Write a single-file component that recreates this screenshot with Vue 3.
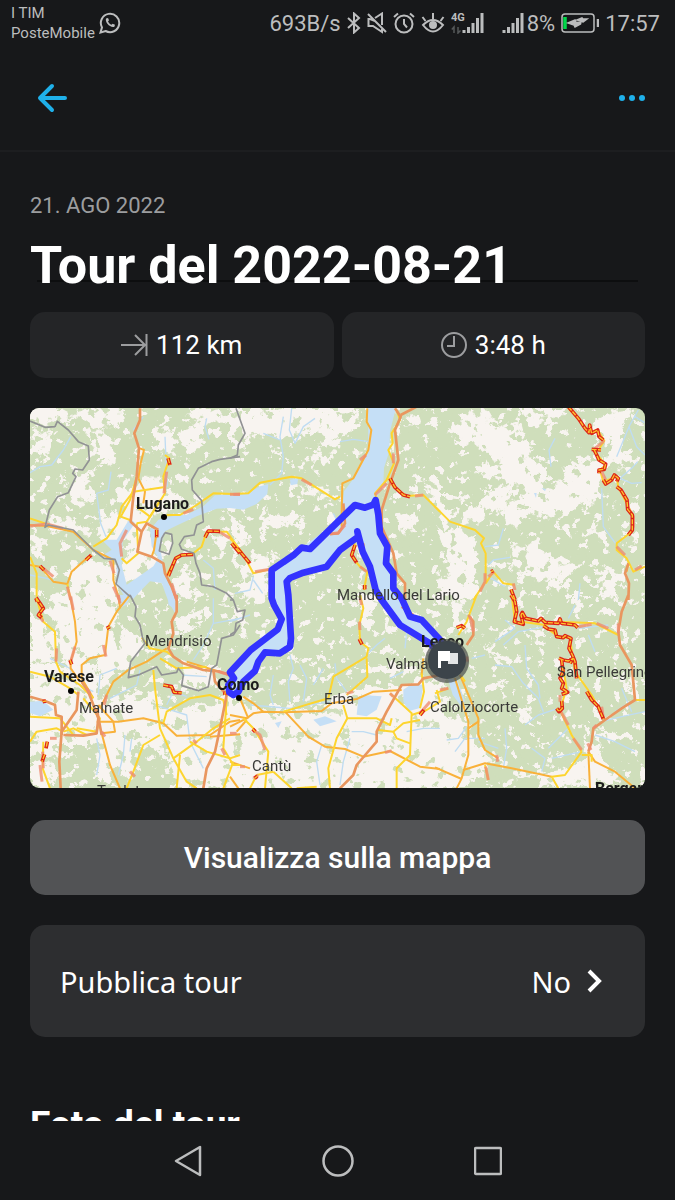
<script setup>
import { ref } from 'vue'

const date = '21. AGO 2022'
const title = ref('Tour del 2022-08-21')
const published = ref(false)

// The map is drawn in six sectors, each with its own origin
const sectors = [
    {
        x: 0, y: -24,
        clearings: [
            '0,25 90,25 130,45 180,30 275,25 270,78 210,82 140,60 80,55 40,68 0,60', '165,95 215,88 260,150 240,195 190,160', '365,90 440,100 432,160 380,150',
            '290,235 410,240 440,290 420,340 360,350 330,420 250,430 195,390 240,340 262,280', '275,480 320,390 365,390 390,490 330,550 280,545',
            '120,500 190,480 250,490 270,610 120,610', '50,345 190,385 180,410 50,385', '470,40 620,30 615,70 520,72', '430,115 500,60 520,120 480,160',
            '0,110 60,80 70,120 10,190', '100,260 180,200 190,290 120,330', '0,410 60,400 50,440 10,460', '430,540 470,500 500,530 480,600 430,600', '540,410 590,400 600,440 570,450'
        ],
        streams: ['0,218 30,200 65,195 100,150 122,110', '243,215 235,270 200,280 212,370 228,410', '405,110 408,180 412,260', '530,55 525,80 537,118', '520,480 550,505 555,570', '310,90 340,50', '0,525 50,535 90,550'],
        major: ['330,25 330,60 313,100 327,145 320,230 310,290 302,365 335,395 322,455 365,470 400,490 405,520 425,560 440,600', '335,395 350,370 385,390'],
        orange: ['330,145 342,150 332,190 325,235', '325,235 345,275 340,310', '380,395 372,450 365,470', '0,375 50,378 130,395 190,450 250,480 250,540 268,600', '0,495 30,500 70,545 112,552 125,515 175,470'],
        yellow: [
            '405,165 418,175 400,230 405,280 380,320 350,365 320,370', '190,440 230,415 260,375 275,320 310,275 400,262', '320,232 300,300 272,350 300,360', '410,345 450,345 500,315 550,280 630,283',
            '320,370 325,460 290,490 275,475', '408,528 440,470 490,460 515,440 530,395 590,395 630,450', '0,355 45,370', '320,320 360,350 390,300', '0,470 20,520 20,590', '112,552 122,600'
        ],
        slow: ['410,215 402,280', '275,470 270,430 290,390', '0,378 50,372 100,385', '425,550 440,600', '565,394 600,415', '610,283 630,283', '40,505 70,530', '112,560 122,600', '240,482 252,520', '250,560 268,600', '460,340 490,328'],
        jam: ['414,175 420,195', '380,390 380,412', '168,480 184,465', '30,498 42,510', '415,528 437,475 455,465 490,463', '525,412 535,393 570,394', '605,430 630,460', '18,595 22,605'],
        border: ['0,63 45,82 75,80 82,64 115,90 145,125 175,138 178,180 158,210 135,207 128,220 138,230 115,278 83,290 58,330 45,382 55,375 130,390 190,450 222,475 255,478 268,510 258,552 300,590', '405,398 425,403 428,430 417,463 388,453 395,415 405,398', '630,170 570,178 545,185 505,205 485,240 487,270 515,302 520,365 500,375 492,405 463,410 448,433 455,448 492,460 498,490 510,520 515,555 550,560 590,580 610,600']
    },
    {
        x: 600, y: -24,
        clearings: ['0,25 390,25 395,65 340,115 300,145 240,90 150,110 60,105 20,150 0,140', '260,150 310,160 300,200 250,190', '110,345 200,330 205,370 100,380', '510,60 580,50 560,80 510,80', '560,240 630,250 630,310', '60,480 110,470 115,600 40,600 20,560', '0,340 30,360 60,430 20,440', '190,250 250,260 330,290 330,305 210,280', '500,360 540,350 560,385 510,390', '465,130 490,125 488,160'],
        streams: ['160,50 150,110 160,170 155,220 120,255', '185,25 178,90 195,130 220,80 255,55', '100,100 150,120', '330,125 370,118 415,125', '310,340 335,390', '70,530 60,570 15,580', '70,540 98,580'],
        major: ['495,25 512,50 495,90 505,180 480,250 455,330 455,380 490,460 500,520 525,550 525,600', '512,45 560,20', '340,310 345,370 325,400 300,402'],
        orange: ['412,25 410,65 424,90 415,150 370,235 337,250 335,340 335,380'],
        yellow: ['0,283 55,280 90,248 185,230 215,235 315,298 330,290', '500,30 510,60 485,100 488,130 475,150 492,190 470,240 435,280 440,300', '475,235 490,260 530,288 580,285 630,335', '0,415 35,455 70,520 120,508', '375,430 365,470 390,500 412,515 402,570'],
        slow: ['0,283 30,283', '215,238 245,255', '390,180 408,165', '435,285 470,250', '490,160 490,190', '300,402 325,398 345,375', '75,515 120,508', '555,288 580,285', '390,500 410,515', '400,430 400,460'],
        jam: ['22,445 60,490', '480,235 495,262 520,285 540,290', '375,435 365,465 380,488', '404,555 404,568'],
        border: ['18,25 45,100 25,135 22,165 0,175']
    },
    {
        x: 1215, y: -24,
        clearings: [
            '40,75 120,40 260,90 275,150 315,180 320,250 340,260 380,240 420,180 500,170 495,290 380,350 265,345 245,385 200,365 190,330 260,290 268,260 180,235 100,215 150,195 160,155 130,130 30,110',
            '250,25 400,25 390,45 300,60 270,70', '510,50 590,25 560,120 590,180 510,215 500,130 480,80', '0,390 60,380 120,420 125,560 110,600 0,600 0,540 60,500', '160,270 240,260 230,300 120,370 80,360 130,310',
            '220,460 300,420 345,470 420,500 370,570 310,540 240,510', '500,500 560,520 550,600 500,590', '0,290 60,340 40,380 0,350', '430,400 500,390 510,405 450,415', '570,160 615,160 600,190'
        ],
        streams: ['360,115 342,150 348,200', '500,265 505,380 545,435', '610,30 582,80 545,170', '582,80 605,140 630,165', '555,235 590,205 608,185', '555,235 590,250 620,248', '205,385 190,435 150,440', '225,472 175,480 160,495', '160,530 210,560', '435,550 430,600', '600,50 628,68'],
        major: ['580,490 570,520 582,550 580,600'],
        orange: ['580,490 575,515'],
        yellow: ['0,320 45,365 120,390 147,415 138,430 152,460 152,545 115,600', '400,25 450,80 465,95 488,90 508,122 490,150 475,150 512,195 495,210 505,245 545,230 550,262 575,310 595,350 590,395 545,430 545,450 575,475 595,515 630,500', '152,550 175,515 205,550 240,555'],
        slow: ['490,100 505,125 480,145', '575,300 580,325 595,350 595,380 582,405', '545,440 570,465', '150,520 150,545 135,575', '160,530 178,515', '600,510 620,498', '235,550 240,570', '500,215 512,240'],
        jam: ['400,20 430,55 450,85 462,98 464,75 470,100 488,90 492,110 505,120', '478,150 492,180 512,192 508,208 492,210 492,220', '505,240 512,252 530,240 538,225 550,235 545,245', '545,260 558,270 576,300 578,328 592,345 592,390 580,405', '168,515 175,512', '228,568 240,600', '470,148 498,150'],
        border: []
    },
    {
        x: 0, y: 561,
        clearings: ['0,40 40,80 75,110 75,200 0,200', '35,0 260,0 265,60 230,150 180,190 150,210 100,200 80,100', '0,205 200,210 200,260 230,330 320,290 380,290 380,345 560,330 630,290 630,580 430,580 420,490 330,440 300,500 210,580 200,450 0,450', '230,110 330,120 340,150 290,220 220,280 200,200', '0,430 80,440 60,580 0,580', '400,380 600,300 600,440 450,500', '440,190 560,230 530,280 460,270', '440,70 520,40 500,60 460,140', '270,510 300,440 310,560'],
        streams: ['630,70 550,85 520,150 490,195', '550,85 550,10', '455,240 530,245', '200,430 210,480 200,540', '330,225 320,270 240,310', '285,420 280,480 265,540', '390,335 470,360 480,440 520,520', '305,430 300,470', '410,330 430,290 470,305', '60,190 120,220 130,260 190,290', '260,220 210,240 205,300'],
        major: ['440,0 440,50 425,80 430,115 415,160 430,185 460,205 520,225 570,230 600,240', '145,290 140,345 95,410 88,500 92,580', '550,225 555,260 590,300 570,400 555,470 530,520 520,580', '100,420 160,422 200,415 205,370 175,290 155,260', '0,305 45,318 75,330 78,360 95,365 95,420', '200,340 215,420'],
        orange: ['300,0 260,50 235,95 225,180 180,190 155,210 155,250 190,310', '120,0 135,80 140,140 122,200 122,220 150,260', '295,225 250,260 230,300 210,340', '200,380 265,380 340,370 400,385 440,422 540,420 600,380 630,375', '540,425 630,418', '205,330 250,380 255,410 215,415 240,510 270,580', '265,0 270,40', '470,200 600,240', '295,225 350,200 410,160'],
        yellow: ['20,10 40,80 75,110 78,200 90,230 150,270 190,310', '0,230 60,245 120,280 145,300', '0,440 20,410 80,400 100,410', '140,400 200,410 210,370 160,310', '370,225 375,280 390,400 430,490 470,560 500,580', '390,420 340,450 310,530 290,580', '400,385 410,350 480,310 540,300 580,315 590,360', '335,128 360,160 410,170 430,185', '390,190 440,220 530,215', '430,490 500,440 550,400 600,370', '480,440 530,470 600,490 630,480', '40,440 38,520 60,580', '450,480 440,580', '0,365 90,370 130,420', '590,310 580,460 610,510 630,510', '610,500 580,580', '100,410 130,400 170,420'],
        slow: ['122,5 130,45', '80,160 78,200', '135,155 122,200', '230,300 222,330', '38,470 40,520', '60,430 80,430', '300,530 315,545', '220,150 228,185', '265,0 270,25', '600,240 565,230', '30,510 36,560', '170,280 180,295', '490,435 500,445', '215,410 225,425', '575,460 585,480', '25,60 40,80'],
        jam: ['18,8 30,25 40,40 25,60 35,68', '230,100 240,95', '400,270 425,275 432,292 455,294', '38,320 48,318', '52,440 48,460', '44,478 36,500', '120,195 125,208', '586,290 584,300'],
        border: ['300,0 318,35 315,65 330,90 338,130 345,145 302,200 295,248 330,238 380,215 395,240 440,232 445,220 460,240 455,272 505,287 535,275 545,220 560,210 575,130 610,120 630,90']
    },
    {
        x: 600, y: 561,
        clearings: ['0,310 80,345 170,350 290,340 350,280 500,275 580,250 640,250 640,590 0,590', '380,0 450,0 430,60 410,100 390,70', '160,340 300,350 420,310 430,440 320,580 150,560', '450,210 530,215 520,240 440,230', '240,120 280,150 250,160', '220,190 290,220 280,230', '480,60 530,100 500,110', '0,40 50,50 60,100 0,80'],
        streams: ['130,240 120,300 130,330', '180,180 190,220 175,260 180,320', '210,210 230,250 220,320', '280,220 250,270', '315,205 320,250 350,290', '410,180 440,150 465,130', '520,230 480,250', '0,80 60,60', '60,330 180,340 300,320', '360,430 340,500 330,570', '365,410 400,410 440,420', '530,410 580,400 630,400', '530,110 525,160', '275,450 260,500 270,570'],
        major: ['330,580 370,540 380,510 440,440 440,410 470,350 515,270 565,268 580,250 630,240', '515,35 550,60'],
        orange: ['0,360 50,370 70,355 100,350 160,352 275,348 305,325 380,312 430,290 515,285', '165,350 235,425 285,455 345,462 400,485 480,468 570,515 630,522', '40,305 70,325 100,350', '30,310 55,370', '0,395 50,370', '20,410 50,375', '0,500 60,520', '0,545 25,580', '580,190 575,240'],
        yellow: ['390,0 400,40 388,90 390,140 415,160 410,185 310,245 295,310 160,350', '410,190 412,245 350,300', '340,330 352,370 320,430 295,520 300,580', '350,370 440,370 480,390 485,370', '40,370 70,400 115,470 105,580', '130,530 185,580', '480,295 545,355 540,480 500,520 500,580', '445,405 490,410 520,385 570,375', '490,410 500,430 540,445', '60,580 80,540 130,530', '545,360 590,345 630,320 620,285', '200,580 260,575', '575,235 582,290 570,340'],
        slow: ['388,80 390,105', '70,405 90,420 105,465', '465,473 485,467', '30,515 45,515', '350,295 370,290', '480,295 490,305', '70,550 85,540', '570,355 600,320', '390,10 395,30', '0,415 20,415'],
        jam: ['388,132 396,148', '570,360 582,345', '68,402 76,410', '74,550 82,544'],
        border: ['0,15 10,15 22,50 45,45 38,75 18,85 15,110 0,120']
    },
    {
        x: 1215, y: 561,
        clearings: ['0,320 60,360 120,440 180,500 90,580 0,580', '160,150 200,190 215,225 180,200', '50,0 110,50 95,110 60,110', '400,0 460,0 430,40', '280,100 330,110 310,150', '540,80 580,110 560,140', '170,260 210,270 200,300', '440,430 490,460 540,560 420,580 250,545 440,510', '570,240 600,260 590,300', '230,330 270,350 300,390 250,370', '480,400 540,420 530,450'],
        streams: ['210,75 240,100 180,140', '330,95 250,110 205,150', '180,210 230,215 265,265 310,310 325,350', '270,150 275,220 310,270 315,310', '370,340 310,360 270,390', '290,460 330,490 320,530', '210,400 215,460 205,520', '400,400 340,460', '500,380 560,365 630,350', '440,470 350,490', '60,470 90,430 150,430', '130,440 190,460', '420,30 400,70', '110,190 150,180', '540,350 570,330', '460,120 480,170', '480,420 540,440 600,470', '35,435 70,430 95,395', '430,100 520,90', '560,280 590,350'],
        major: ['580,0 560,50 550,110 555,150 590,210 600,315 560,340 510,375 475,400 470,440 460,470', '100,60 115,80 115,120 95,150'],
        orange: ['60,250 100,380 100,480 80,550 65,580', '75,240 130,370 130,420 150,465 190,490', '460,470 480,500 540,530 600,580', '85,525 150,505 230,520 350,545', '100,400 130,380', '0,517 80,552', '460,470 465,580'],
        yellow: ['125,0 95,80 70,120', '230,0 240,80 260,80 330,90 370,80 480,85 550,120', '330,95 370,125 405,130 420,230 470,300 510,375', '380,195 395,280 375,345 410,420 440,470', '440,470 390,540 350,545 370,580', '600,315 630,315', '440,480 470,480 470,500', '150,510 160,555', '0,295 40,280', '80,245 90,260'],
        slow: ['105,65 115,110', '430,95 470,88', '485,85 520,100', '375,345 400,390', '415,430 440,465', '550,85 550,115', '475,400 485,390', '185,480 188,500', '152,515 160,555', '500,335 505,370', '458,445 468,465', '15,285 40,280', '375,300 375,320', '95,185 97,200'],
        jam: ['228,0 240,20 245,50 238,80 265,88 258,60 262,52 272,70 310,78 318,70 330,82 370,85 375,72 380,85 420,90 428,98', '325,92 340,102 360,105 365,125 385,128 390,122 408,130 402,160 412,180 420,200 425,250', '372,190 385,195 400,198 415,190 405,205', '380,195 384,230 375,250 385,265 380,280 398,292 380,298', '380,318 382,340 372,350 365,340', '455,290 470,315 490,335 505,372', '65,98 80,92 90,100'],
        border: []
    }
]

const places = [
    { name: 'Lugano', x: 106, y: 101, big: true },
    { name: 'Mandello del Lario', x: 307, y: 192 },
    { name: 'Mendrisio', x: 115, y: 238 },
    { name: 'Varese', x: 14, y: 274, big: true },
    { name: 'Malnate', x: 49, y: 305 },
    { name: 'Como', x: 187, y: 282, big: true },
    { name: 'Lecco', x: 391, y: 239, big: true },
    { name: 'Valmadrera', x: 356, y: 261 },
    { name: 'Erba', x: 294, y: 296 },
    { name: 'Calolziocorte', x: 400, y: 304 },
    { name: 'San Pellegrino Terme', x: 527, y: 269 },
    { name: 'Cantù', x: 222, y: 363 },
    { name: 'Tradate', x: 67, y: 388 },
    { name: 'Bergamo', x: 565, y: 386, big: true }
]

const route = '1251,756 1230,695 1175,636 1140,626 1115,571 1090,541 1090,496 1068,466 1072,416 1050,376 1045,320 1037,276 1030,290 1005,299 975,291 840,423 815,419 790,442 725,486 725,571 732,591 755,633 743,664 695,701 662,726 600,793 612,811 595,831 598,853 610,861 625,851 640,821 675,789 685,761 705,733 750,736 780,716 783,691 775,561 770,521 780,510 820,494 890,476 930,426 985,386 982,370 998,431 1020,476 1037,546 1055,576 1110,651 1200,706 1230,740'
</script>

<template>
    <div class="screen">
        <header class="status">
            <div class="carrier">I TIM<br>PosteMobile</div>
            <svg class="whatsapp" width="22" height="22" viewBox="0 0 22 22" fill="none" stroke="currentColor" stroke-width="2">
                <path d="M1.5 20.5 3 15.4A9.2 9.2 0 1 1 6.6 19Z" />
                <path d="M7 6.5C5.8 10.5 11 16 15.4 14.7L16 12.8 13.6 11.7 12.5 12.8C10.8 12 9.8 11 9 9.4L10 8.3 9 6Z" fill="currentColor" stroke="none" />
            </svg>
            <span class="speed">693B/s</span>
            <svg width="14" height="22" viewBox="0 0 14 22" fill="none" stroke="currentColor" stroke-width="2">
                <path d="M1 6 12 16 7 20.5V1.5L12 6 1 16" />
            </svg>
            <svg width="20" height="22" viewBox="0 0 20 22" fill="none" stroke="currentColor" stroke-width="2">
                <path d="M1 2 19 20M8 6 15 1.5V13M3 7H1.5V14H6L15 20V17M8 9 3 7" />
            </svg>
            <svg width="22" height="22" viewBox="0 0 22 22" fill="none" stroke="currentColor" stroke-width="2">
                <circle cx="11" cy="12" r="8.5" />
                <path d="M11 7V12L14 15.5M1 5 5 1.5M17 1.5 21 5" />
            </svg>
            <svg width="24" height="22" viewBox="0 0 24 22" fill="none" stroke="currentColor" stroke-width="2">
                <path d="M2 13Q12 3 22 13 12 26 2 13ZM12 7V1M4.5 9 1.5 5M19.5 9 22.5 5" />
                <circle cx="12" cy="13" r="4" fill="currentColor" stroke="none" />
            </svg>
            <svg width="33" height="22" viewBox="0 0 33 22" fill="none" stroke="currentColor" stroke-width="3">
                <path d="M13 18V21M17.5 15V21M22 11V21M26.5 6V21M31 1V21" />
                <path d="M3 21V15L.8 17.5M7 15V21L9.5 18.5" stroke="#55585a" stroke-width="1.5" />
                <text x="0" y="9" class="net">4G</text>
            </svg>
            <svg class="sim2" width="22" height="22" viewBox="0 0 22 22" stroke="currentColor" stroke-width="3">
                <path d="M2 18V21M6.5 15V21M11 11V21M15.5 6V21M20 1V21" />
            </svg>
            <span class="percent">8%</span>
            <svg width="38" height="20" viewBox="0 0 38 20" fill="none" stroke="currentColor" stroke-width="1.5">
                <rect x="1" y="1" width="32" height="18" rx="3" />
                <path d="M37 6V14" stroke-width="2.5" />
                <path d="M4 4V16" stroke="#00d84a" stroke-width="3.5" />
                <path d="M7 10 14 7 15 9.5 20 9 19.5 11 14 14 13 12ZM16 7 21 5 22 6 26 6 22 9 21 8Z" fill="currentColor" />
            </svg>
            <time class="clock">17:57</time>
        </header>

        <div class="appbar">
            <button class="icon-btn" type="button" aria-label="Indietro">
                <svg width="32" height="32" viewBox="0 0 32 32" fill="none" stroke="currentColor" stroke-width="4" stroke-linecap="round" stroke-linejoin="round">
                    <path d="M16 4 4 16 16 28M4 16H29" />
                </svg>
            </button>
            <button class="icon-btn" type="button" aria-label="Altro">
                <svg width="26" height="8" viewBox="0 0 26 8" fill="currentColor">
                    <circle cx="3" cy="4" r="3" />
                    <circle cx="13" cy="4" r="3" />
                    <circle cx="23" cy="4" r="3" />
                </svg>
            </button>
        </div>

        <main class="content">
            <p class="date">{{ date }}</p>
            <h1 class="title"><span>{{ title }}</span></h1>

            <div class="stats">
                <div class="stat">
                    <svg width="27" height="22" viewBox="0 0 27 22" fill="none" stroke="currentColor" stroke-width="2">
                        <path d="M0 11H24M14 1 24 11 14 21M25.5 0V22" />
                    </svg>
                    <span>112 km</span>
                </div>
                <div class="stat">
                    <svg width="26" height="26" viewBox="0 0 26 26" fill="none" stroke="currentColor" stroke-width="2">
                        <circle cx="13" cy="13" r="12" />
                        <path d="M13 4V14H6" />
                    </svg>
                    <span>3:48 h</span>
                </div>
            </div>

            <svg class="map" viewBox="0 0 615 380" role="img" aria-label="Mappa del tour">
                <defs>
                    <filter id="rough" x="-5%" y="-5%" width="110%" height="110%">
                        <feTurbulence type="fractalNoise" baseFrequency="0.03" numOctaves="4" seed="4" result="n" />
                        <feDisplacementMap in="SourceGraphic" in2="n" scale="70" xChannelSelector="R" yChannelSelector="G" />
                    </filter>
                    <filter id="speckle" x="0" y="0" width="100%" height="100%" color-interpolation-filters="sRGB">
                        <feTurbulence type="fractalNoise" baseFrequency="0.035" numOctaves="4" seed="11" />
                        <feColorMatrix values="0 0 0 0 .973  0 0 0 0 .957  0 0 0 0 .941  22 0 0 0 -13.6" />
                    </filter>
                    <filter id="woods" x="0" y="0" width="100%" height="100%" color-interpolation-filters="sRGB">
                        <feTurbulence type="fractalNoise" baseFrequency="0.028" numOctaves="4" seed="23" />
                        <feColorMatrix values="0 0 0 0 .812  0 0 0 0 .871  0 0 0 0 .733  22 0 0 0 -14" />
                    </filter>
                </defs>
                <g transform="scale(.33333)" fill="none" stroke-linejoin="round">
                    <rect width="1845" height="1140" fill="#cfdebb" />
                    <rect width="1845" height="1140" filter="url(#speckle)" />
                    <g filter="url(#rough)" fill="#f8f4f0">
                        <g v-for="(s, i) in sectors" :key="i" :transform="`translate(${s.x} ${s.y})`">
                            <polygon v-for="p in s.clearings" :key="p" :points="p" />
                        </g>
                    </g>
                    <rect width="1845" height="1140" filter="url(#woods)" />

                    <g class="streams">
                        <g v-for="(s, i) in sectors" :key="i" :transform="`translate(${s.x} ${s.y})`">
                            <polyline v-for="p in s.streams" :key="p" :points="p" />
                        </g>
                    </g>

                    <g class="water">
                        <path d="M1014 0H1098L1080 70 1078 130 1062 180 1060 230 1035 276 1055 376 1072 425 1070 466 1092 500 1092 545 1120 575 1142 630 1180 636 1240 695 1260 770 1215 720 1110 651 1052 572 1020 476 998 431 984 375 930 426 890 476 820 494 772 521 780 600 785 700 750 736 705 733 685 770 640 825 600 860 595 825 660 726 745 664 755 630 728 580 725 486 815 419 935 330 942 250 975 206 1015 125Z" />
                        <path d="M600 300 560 302 500 325 445 350 405 370 390 420 400 470 415 510 440 580 438 620 415 580 395 525 360 520 335 545 310 572 280 560 262 530 258 460 210 448 245 425 215 395 260 395 300 330 315 345 278 400 275 470 290 530 320 510 370 475 385 450 365 415 360 365 385 335 425 325 470 320 520 295 555 262 650 258 690 235 715 228 712 258 680 288 640 305Z" />
                        <path d="M266 561H302L290 590 270 600ZM415 550H440L430 600 415 590ZM0 881 40 878 70 905 30 925 0 915ZM985 873 1005 862 1055 865 1040 905 1010 925 980 920ZM1120 845 1145 828 1180 830 1170 900 1135 910 1120 880ZM850 935 885 925 920 940 870 955ZM1253 810 1282 815 1305 880 1290 890 1268 860ZM735 945 755 940 745 960ZM780 215 805 210 802 228 782 232ZM1535 240 1548 243 1545 250ZM1512 255 1520 255 1518 270Z" />
                    </g>

                    <g v-for="kind in ['orange', 'yellow', 'major', 'slow', 'jam', 'border']" :key="kind" :class="kind">
                        <g v-for="(s, i) in sectors" :key="i" :transform="`translate(${s.x} ${s.y})`">
                            <polyline v-for="p in s[kind]" :key="p" :points="p" />
                        </g>
                    </g>
                    <!-- yellow core over the jammed stretches -->
                    <g class="core">
                        <g v-for="(s, i) in sectors" :key="i" :transform="`translate(${s.x} ${s.y})`">
                            <polyline v-for="p in s.jam" :key="p" :points="p" />
                        </g>
                    </g>

                    <polyline class="route" :points="route" />
                </g>

                <circle cx="134" cy="109" r="3" />
                <circle cx="41" cy="283" r="3" />
                <circle cx="209" cy="290" r="3" />
                <text v-for="p in places" :key="p.name" :x="p.x" :y="p.y" class="place" :class="{ big: p.big }">{{ p.name }}</text>

                <circle cx="417" cy="253" r="22" fill="#4a4d4a" fill-opacity=".7" />
                <circle cx="417" cy="252" r="19" fill="#3c444a" />
                <path d="M408 260V243H420V245H428V256H418V253H411V260Z" fill="#fff" />
                <path d="M420 245H428V256H418V253H420Z" fill="#e3e5e6" />
            </svg>

            <button class="show-map" type="button">Visualizza sulla mappa</button>

            <button class="publish" type="button" @click="published = !published">
                <span>Pubblica tour</span>
                <span class="value">{{ published ? 'Sì' : 'No' }}</span>
                <svg width="16" height="24" viewBox="0 0 16 24" fill="none" stroke="currentColor" stroke-width="4">
                    <path d="M2 2 12 12 2 22" />
                </svg>
            </button>

            <h2 class="photos">Foto del tour</h2>
        </main>

        <nav class="navbar">
            <button type="button" aria-label="Indietro">
                <svg width="28" height="32" viewBox="0 0 28 32"><path d="M26 2V30L2 16Z" /></svg>
            </button>
            <button type="button" aria-label="Home">
                <svg width="32" height="32" viewBox="0 0 32 32"><circle cx="16" cy="16" r="14.5" /></svg>
            </button>
            <button type="button" aria-label="Recenti">
                <svg width="28" height="32" viewBox="0 0 28 32"><rect x="1" y="3" width="26" height="26" rx="1" /></svg>
            </button>
        </nav>
    </div>
</template>

<style>
body {
    margin: 0;
    background: #17181a;
}
</style>

<style scoped>
.screen {
    display: flex;
    flex-direction: column;
    height: 100vh;
    overflow: hidden;
    background: #17181a;
    color: #fff;
    font-family: Roboto, "Liberation Sans", sans-serif;
}

button {
    border: 0;
    padding: 0;
    background: none;
    color: inherit;
    font-family: inherit;
    cursor: pointer;
}

svg {
    display: block;
    flex: none;
}

/* Status bar */
.status {
    display: flex;
    align-items: center;
    flex: none;
    height: 46px;
    padding: 0 15px 0 11px;
    gap: 6px;
    color: #bcbdbe;
    font-size: 22px;
}

.carrier {
    font-size: 15px;
    line-height: 20px;
}

.whatsapp {
    margin-left: -2px;
}

.speed {
    margin-left: auto;
}

.net {
    fill: currentColor;
    stroke: none;
    font-size: 11px;
    font-weight: 700;
}

.sim2 {
    margin-left: 12px;
}

.percent {
    margin-left: -3px;
}

/* App bar */
.appbar {
    display: flex;
    align-items: center;
    justify-content: space-between;
    flex: none;
    height: 104px;
    padding: 0 30px 0 36px;
    border-bottom: 2px solid #1d1e20;
    color: #1fb0ea;
}

.icon-btn {
    display: flex;
}

/* Content */
.content {
    flex: 1;
    min-height: 0;
    overflow: hidden;
    padding: 38px 30px 0;
}

.date {
    margin: 0;
    color: #9c9d9f;
    font-size: 22px;
    line-height: 32px;
}

.title {
    position: relative;
    margin: 12px 0 14px;
    font-size: 52px;
    font-weight: 700;
    line-height: 64px;
}

.title span {
    position: relative;
}

.title::before {
    content: "";
    position: absolute;
    left: 7px;
    right: 7px;
    bottom: 16px;
    height: 2px;
    background: #0d0e0f;
}

.stats {
    display: grid;
    grid-template-columns: 1fr 1fr;
    gap: 8px;
}

.stat {
    display: flex;
    align-items: center;
    justify-content: center;
    gap: 8px;
    height: 66px;
    border-radius: 15px;
    background: #242527;
    font-size: 26px;
}

.stat svg {
    color: #9c9d9f;
}

/* Map */
.map {
    width: 100%;
    height: auto;
    margin: 30px 0 32px;
    border-radius: 9px;
}

.streams {
    stroke: #bfdcf2;
    stroke-width: 4;
}

.water {
    fill: #c5dff6;
}

.orange {
    stroke: #f9b13a;
    stroke-width: 6;
}

.yellow {
    stroke: #fdd52f;
    stroke-width: 6;
}

.major {
    stroke: #e9965f;
    stroke-width: 8;
}

.slow {
    stroke: #ee8c70;
    stroke-width: 9;
    stroke-opacity: 0.8;
}

.jam {
    stroke: #dd2418;
    stroke-width: 11;
}

.core {
    stroke: #fdc52c;
    stroke-width: 4;
    stroke-dasharray: 15 4;
}

.border {
    stroke: #919294;
    stroke-width: 5;
}

.route {
    stroke: #3333ff;
    stroke-width: 20;
}

.place {
    fill: #3a3a38;
    font-size: 15px;
}

.place.big {
    fill: #1c1c1c;
    font-size: 16px;
    font-weight: 700;
}

/* Actions */
.show-map {
    display: block;
    width: 100%;
    height: 75px;
    border-radius: 15px;
    background: #525355;
    font-size: 30px;
    font-weight: 500;
}

.publish {
    display: flex;
    align-items: center;
    width: 100%;
    height: 112px;
    margin-top: 30px;
    padding: 0 42px 0 30px;
    border-radius: 15px;
    background: #2d2e30;
    font-family: "Noto Sans", "Open Sans", sans-serif;
    font-size: 29px;
}

.publish .value {
    margin-left: auto;
    margin-right: 16px;
}

.photos {
    margin: 64px 0 0;
    font-size: 37px;
    font-weight: 700;
    line-height: 48px;
}

/* System navigation */
.navbar {
    display: flex;
    align-items: center;
    justify-content: center;
    gap: 120px;
    flex: none;
    height: 79px;
}

.navbar svg {
    fill: none;
    stroke: #bcbdbe;
    stroke-width: 2.5;
    stroke-linejoin: round;
}
</style>
